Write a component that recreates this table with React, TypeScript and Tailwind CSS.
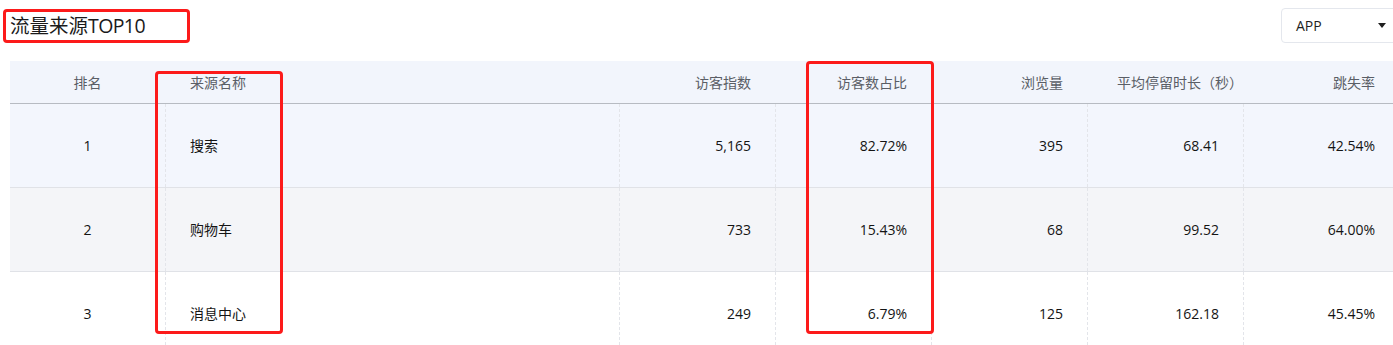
import React from "react";

const FONT = { fontFamily: '"Open Sans", "Noto Sans CJK SC", sans-serif' };

const headers = ["排名", "来源名称", "访客指数", "访客数占比", "浏览量", "平均停留时长（秒）", "跳失率"];

const rows = [
  { rank: "1", name: "搜索", v: "5,165", p: "82.72%", pv: "395", t: "68.41", b: "42.54%", bg: "bg-[#f3f6fd]" },
  { rank: "2", name: "购物车", v: "733", p: "15.43%", pv: "68", t: "99.52", b: "64.00%", bg: "bg-[#f4f5f8]" },
  { rank: "3", name: "消息中心", v: "249", p: "6.79%", pv: "125", t: "162.18", b: "45.45%", bg: "bg-white" },
];

const grid = "grid grid-cols-[155px_454px_156px_156px_156px_156px_156px]";

export default function App() {
  return (
    <div className="w-screen h-[345px] overflow-hidden bg-white text-[14px]" style={FONT}>
      <div className="relative w-[1420px] pl-[10px]">
        {/* top bar */}
        <div className="flex items-center pt-[8px] h-[43px] w-[1410px]">
          <div className="flex-1 text-[19.5px] leading-none text-[#1a1a1a]">
            流量来源<span className="tracking-[-0.6px]">TOP10</span>
          </div>
          <div className="mr-[19px] w-[120px] h-[35px] border border-[#e4e7ed] rounded-[4px] flex items-center pl-[14px] pr-[14px] text-[14px] text-[#1f1f1f]">
            <span className="flex-1">APP</span>
            <span className="w-0 h-0 border-l-[4px] border-r-[4px] border-t-[5px] border-l-transparent border-r-transparent border-t-[#1f1f1f]" />
          </div>
        </div>

        {/* table */}
        <div className="mt-[18px] w-[1389px]">
          <div className={`${grid} h-[43px] bg-[#f2f5fc] border-b border-[#b7bbc2] text-[#5a5e66]`}>
            {headers.map((h, i) => (
              <div
                key={h}
                className={`flex items-center ${
                  i === 0 ? "justify-center" : i === 1 ? "pl-[25px]" : i === 5 ? "justify-end pr-0" : "justify-end pr-[24px]"
                }`}
              >
                {h}
              </div>
            ))}
          </div>
          {rows.map((r) => {
            const cells = [r.rank, r.name, r.v, r.p, r.pv, r.t, r.b];
            return (
              <div key={r.rank} className={`${grid} h-[84px] ${r.bg} border-b border-[#e0e2e7] text-[#141414]`}>
                {cells.map((c, i) => (
                  <div
                    key={i}
                    className={`flex items-center ${i > 0 ? "border-l border-dashed border-[#e3e5ea]" : ""} ${
                      i === 0 ? "justify-center" : i === 1 ? "pl-[24px]" : "justify-end pr-[24px]"
                    }`}
                  >
                    {c}
                  </div>
                ))}
              </div>
            );
          })}
        </div>

        {/* red annotation boxes */}
        <div className="absolute left-[3px] top-[9px] w-[187px] h-[34px] border-[3px] border-[#fc1a1a] rounded-[4px]" />
        <div className="absolute left-[155px] top-[71px] w-[128px] h-[263px] border-[3px] border-[#fc1a1a] rounded-[4px]" />
        <div className="absolute left-[806px] top-[61px] w-[128px] h-[273px] border-[3px] border-[#fc1a1a] rounded-[4px]" />
      </div>
    </div>
  );
}
